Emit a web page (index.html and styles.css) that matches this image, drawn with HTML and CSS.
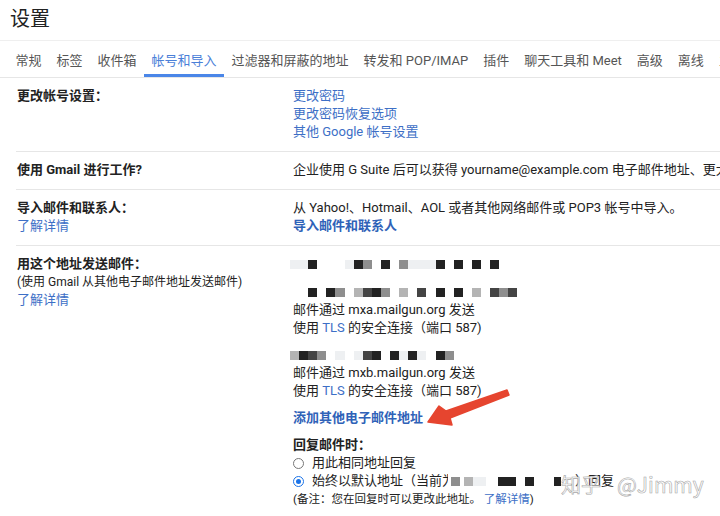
FILE: index.html
```html
<!DOCTYPE html>
<html lang="zh-CN">
<head>
  <meta charset="UTF-8">
  <title>设置</title>
  <link rel="stylesheet" href="styles.css">
</head>
<body>
<div class="page">
  <div class="title">设置</div>

  <div class="tabs">
    <div class="tab">常规</div>
    <div class="tab">标签</div>
    <div class="tab">收件箱</div>
    <div class="tab active">帐号和导入</div>
    <div class="tab">过滤器和屏蔽的地址</div>
    <div class="tab">转发和 POP/IMAP</div>
    <div class="tab">插件</div>
    <div class="tab">聊天工具和 Meet</div>
    <div class="tab">高级</div>
    <div class="tab">离线</div>
    <div class="tab">主题</div>
  </div>

  <div class="settings">
    <div class="row">
      <div class="label"><b>更改帐号设置：</b></div>
      <div class="value">
        <a class="link">更改密码</a><br>
        <a class="link">更改密码恢复选项</a><br>
        <a class="link">其他 Google 帐号设置</a>
      </div>
    </div>

    <div class="row">
      <div class="label"><b>使用 Gmail 进行工作?</b></div>
      <div class="value">企业使用 G Suite 后可以获得 yourname@example.com 电子邮件地址、更大的存储空间以及管理工具。</div>
    </div>

    <div class="row">
      <div class="label">
        <b>导入邮件和联系人：</b><br>
        <a class="link">了解详情</a>
      </div>
      <div class="value">
        从 Yahoo!、Hotmail、AOL 或者其他网络邮件或 POP3 帐号中导入。<br>
        <a class="link strong">导入邮件和联系人</a>
      </div>
    </div>

    <div class="row last">
      <div class="label">
        <b>用这个地址发送邮件：</b><br>
        <span class="small">(使用 Gmail 从其他电子邮件地址发送邮件)</span><br>
        <a class="link">了解详情</a>
      </div>
      <div class="value">
        <div class="sender">
          <div class="mosaic">
            <i class="k1"></i><i class="k1"></i><i class="k5"></i><i></i><i></i><i></i><i class="k1"></i><i class="k5"></i><i class="k3"></i><i></i><i class="k5"></i><i></i><i class="k3"></i><i class="k1"></i><i class="k1"></i><i class="k1"></i><i class="k5"></i><i></i><i class="k5"></i><i></i><i class="k5"></i><i></i><i class="k5"></i>
          </div>
          <div class="mosaic gap">
            <i></i><i></i><i class="k5"></i><i></i><i class="k5"></i><i class="k3"></i><i></i><i class="k2"></i><i class="k4"></i><i class="k5"></i><i class="k3"></i><i></i><i class="k2"></i><i></i><i class="k4"></i><i></i><i class="k5"></i><i></i><i class="k5"></i><i></i><i class="k2"></i><i></i><i class="k4"></i><i class="k3"></i><i class="k4"></i>
          </div>
          <div>邮件通过 mxa.mailgun.org 发送</div>
          <div>使用 <a class="link">TLS</a> 的安全连接（端口 587)</div>
        </div>

        <div class="sender">
          <div class="mosaic">
            <i class="k2"></i><i class="k5"></i><i class="k4"></i><i class="k3"></i><i></i><i class="k1"></i><i></i><i class="k1"></i><i class="k4"></i><i class="k5"></i><i></i><i class="k5"></i><i class="k1"></i><i class="k5"></i><i class="k1"></i><i></i><i class="k5"></i><i class="k3"></i>
          </div>
          <div>邮件通过 mxb.mailgun.org 发送</div>
          <div>使用 <a class="link">TLS</a> 的安全连接（端口 587)</div>
        </div>

        <div class="sender">
          <a class="link strong">添加其他电子邮件地址</a>
        </div>

        <div class="sender">
          <b>回复邮件时：</b>
          <div class="radio-line"><span class="radio"></span>用此相同地址回复</div>
          <div class="radio-line"><span class="radio checked"></span>始终以默认地址（当前<span class="cut">为</span><span class="blur"><i class="g3"></i><i class="k3"></i><i class="g4"></i><i class="k2"></i><i class="k1 w13"></i><i class="g12"></i><i class="k5 w18"></i><i class="g9"></i><i class="k5"></i><i class="g20"></i><i class="k5 w7"></i></span><span class="tail">）回复</span></div>
          <div class="note">(备注：您在回复时可以更改此地址。 <a class="link">了解详情</a>)</div>
        </div>
      </div>
    </div>
  </div>

  <svg class="arrow" width="100" height="50" viewBox="0 0 100 50">
    <polygon points="87,10 89,15 30,38 32,45 8,42 19,26 26,31" fill="#e6452f" stroke="#e6452f" stroke-width="1.5" stroke-linejoin="round"/>
  </svg>

  <div class="watermark">知乎<span class="handle">@Jimmy</span></div>
</div>
</body>
</html>
```

FILE: styles.css
```css
body {
  margin: 0;
  font-family: Roboto, "Noto Sans CJK SC", sans-serif;
  font-size: 13px;
  color: #222;
  background: #fff;
}

.page {
  position: relative;
  width: 720px;
  height: 516px;
  overflow: hidden;
}

.title {
  height: 40px;
  line-height: 39px;
  padding-left: 10px;
  font-size: 20px;
  border-bottom: 1px solid #efefef;
}

.tabs {
  display: flex;
  height: 37px;
  padding-left: 8px;
  border-bottom: 1px solid #e6e6e6;
  white-space: nowrap;
  box-sizing: border-box;
}

.tab {
  display: flex;
  align-items: center;
  flex: none;
  padding: 3px 7.5px 0;
  border-bottom: 3px solid transparent;
  color: #555;
}

.tab.active {
  color: #4a80d8;
  border-bottom-color: #4a86e8;
}

.settings {
  margin-left: 16px;
}

.row {
  display: flex;
  padding: 9px 0 10px;
  border-bottom: 1px solid #e6e6e6;
  line-height: 18px;
}

.row.last {
  border-bottom: none;
}

.label {
  width: 276px;
  flex: none;
  padding-left: 1px;
}

.value {
  flex: 1;
  white-space: nowrap;
}

.link {
  color: #3d6fc6;
  text-decoration: none;
}

.link.strong {
  color: #2f62b8;
  font-weight: bold;
}

.small {
  font-size: 12px;
}

.sender {
  margin-bottom: 9px;
}

.mosaic {
  display: flex;
  align-items: center;
  height: 18px;
  margin-left: -3px;
}

.mosaic.gap {
  margin-top: 10px;
}

.mosaic i {
  display: block;
  width: 9.1px;
  height: 9px;
}

.k1 { background: #eef0f2; }
.k2 { background: #b4b4b4; }
.k3 { background: #8e8e8e; }
.k4 { background: #444; }
.k5 { background: #222; }

.radio-line {
  display: flex;
  align-items: center;
}

.radio {
  width: 9px;
  height: 9px;
  margin-right: 8px;
  border: 1px solid #777;
  border-radius: 50%;
  box-sizing: content-box;
  position: relative;
}

.radio.checked {
  border-color: #1a73e8;
}

.radio.checked::after {
  content: "";
  position: absolute;
  left: 2px;
  top: 2px;
  width: 5px;
  height: 5px;
  border-radius: 50%;
  background: #1a73e8;
}

.cut {
  display: inline-block;
  width: 6px;
  overflow: hidden;
}

.blur {
  display: flex;
  align-items: center;
  height: 18px;
}

.blur i {
  display: block;
  width: 9px;
  height: 9px;
}

.blur .w7 { width: 7px; }
.blur .w13 { width: 13px; }
.blur .w18 { width: 18px; }
.blur .g3 { width: 3px; }
.blur .g4 { width: 4px; }
.blur .g9 { width: 9px; }
.blur .g12 { width: 12px; }
.blur .g20 { width: 20px; }

.tail {
  margin-left: 14px;
}

.note {
  font-size: 11.5px;
}

.arrow {
  position: absolute;
  left: 420px;
  top: 380px;
}

.watermark {
  position: absolute;
  left: 561px;
  top: 469px;
  font-family: "Noto Sans CJK SC", sans-serif;
  font-size: 20px;
  color: rgba(255, 255, 255, 0.85);
  -webkit-text-stroke: 0.6px #a8a8a8;
  white-space: nowrap;
}

.watermark .handle {
  margin-left: 16px;
  font-size: 21px;
}
```
